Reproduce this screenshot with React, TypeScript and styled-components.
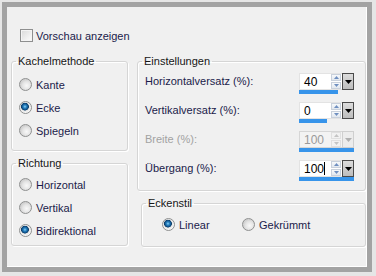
import React from "react";
import styled, { createGlobalStyle } from "styled-components";

const GlobalStyle = createGlobalStyle`
  html, body {
    margin: 0;
    padding: 0;
  }
  body {
    width: 376px;
    height: 276px;
    overflow: hidden;
    background: #e6e6e6;
    font-family: "Liberation Sans", Arial, sans-serif;
    font-size: 11px;
  }
`;

const Window = styled.div`
  box-sizing: border-box;
  margin: 2px 0 0 2px;
  width: 370px;
  height: 270px;
  border: 5px solid #a3a3a3;
  background: #f0f0f0;
  padding: 22px 0 0 4px;
  box-shadow: inset -1px -1px 0 #ffffff;
`;

const CheckRow = styled.label`
  display: flex;
  align-items: center;
  gap: 3px;
  height: 13px;
  margin-left: 9px;
  color: #1b1b4a;
`;

const CheckBox = styled.span`
  box-sizing: border-box;
  width: 13px;
  height: 13px;
  border: 1px solid #8e8f8f;
  background: linear-gradient(135deg, #d9d9d9 0%, #f3f3f3 70%, #fbfbfb 100%);
  box-shadow: inset 0 0 0 1px #f4f4f4;
`;

const Columns = styled.div`
  display: grid;
  grid-template-columns: 117px 229px;
  column-gap: 9px;
  margin-top: 12px;
`;

const Column = styled.div`
  display: flex;
  flex-direction: column;
  gap: 5px;
`;

const Group = styled.fieldset<{ $h: number; $inset?: number }>`
  box-sizing: border-box;
  height: ${(p) => p.$h}px;
  margin: 0 0 0 ${(p) => p.$inset ?? 0}px;
  min-width: 0;
  padding: 0;
  border: 1px solid #d5d5d5;
  border-radius: 3px;
  box-shadow: inset 1px 1px 0 #ffffff, 1px 1px 0 #ffffff;
`;

const Title = styled.legend`
  margin-left: 4px;
  padding: 0 2px;
  font-size: 11px;
  line-height: 14px;
  color: #161616;
`;

const RadioList = styled.div<{ $top: number }>`
  display: flex;
  flex-direction: column;
  padding: ${(p) => p.$top}px 0 0 7px;
`;

const RadioRow = styled.label<{ $w?: number }>`
  display: flex;
  align-items: center;
  gap: 4px;
  height: 23px;
  width: ${(p) => (p.$w ? `${p.$w}px` : "auto")};
  color: #1b1b4a;
`;

const RadioDot = styled.span<{ $on?: boolean }>`
  box-sizing: border-box;
  flex: none;
  width: 13px;
  height: 13px;
  border-radius: 50%;
  border: 1px solid #8f9090;
  background: ${(p) =>
    p.$on
      ? "radial-gradient(circle at 45% 42%, #8fd2f5 0, #2b86c4 1.5px, #10538c 3px, #0c3c66 3.6px, #e6e6e6 4.2px, #f6f6f6 6px)"
      : "radial-gradient(circle at 60% 60%, #f9f9f9 0, #e4e4e4 4px, #d2d2d2 6px)"};
`;

const HRow = styled.div`
  display: flex;
  padding: 3px 0 0 20px;
`;

const Settings = styled.div`
  display: flex;
  flex-direction: column;
  gap: 7px;
  padding: 5px 11px 0 7px;
`;

const SettingRow = styled.div`
  display: grid;
  grid-template-columns: 1fr 55px;
  align-items: start;
  height: 22px;
`;

const Label = styled.span<{ $off?: boolean }>`
  line-height: 17px;
  color: ${(p) => (p.$off ? "#a2a2a2" : "#1b1b4a")};
`;

const Spin = styled.div`
  display: flex;
  flex-direction: column;
`;

const SpinTop = styled.div`
  display: flex;
  height: 17px;
`;

const Field = styled.div<{ $off?: boolean }>`
  box-sizing: border-box;
  display: flex;
  align-items: center;
  width: 31px;
  padding-left: 4px;
  background: ${(p) => (p.$off ? "#f3f3f3" : "#ffffff")};
  border: 1px solid ${(p) => (p.$off ? "#d6d6d6" : "#e3e3e3")};
  border-right: none;
  color: ${(p) => (p.$off ? "#9a9a9a" : "#000000")};
  font-size: 12px;
`;

const Caret = styled.span`
  display: inline-block;
  width: 1px;
  height: 13px;
  background: #000;
`;

const Arrows = styled.div<{ $off?: boolean }>`
  box-sizing: border-box;
  width: 12px;
  display: flex;
  flex-direction: column;
  justify-content: center;
  gap: 1px;
  padding: 0 1px;
  background: ${(p) => (p.$off ? "#f3f3f3" : "#ffffff")};
  border-top: 1px solid ${(p) => (p.$off ? "#d6d6d6" : "#e3e3e3")};
  border-bottom: 1px solid ${(p) => (p.$off ? "#d6d6d6" : "#e3e3e3")};
`;

const ArrowBtn = styled.span<{ $off?: boolean }>`
  box-sizing: border-box;
  height: 7px;
  display: flex;
  align-items: center;
  justify-content: center;
  border: 1px solid ${(p) => (p.$off ? "#e0e0e0" : "#c9d1dc")};
  background: ${(p) => (p.$off ? "#f2f2f2" : "linear-gradient(#f7f9fb, #e2e8ef)")};
`;

const Drop = styled.div<{ $off?: boolean }>`
  box-sizing: border-box;
  width: 12px;
  display: flex;
  align-items: center;
  justify-content: center;
  border: 1px solid ${(p) => (p.$off ? "#cfcfcf" : "#4a4a4a")};
  background: ${(p) => (p.$off ? "#ececec" : "linear-gradient(#dcdcdc, #bdbdbd)")};
`;

const Bar = styled.div<{ $fill: number }>`
  height: 4px;
  width: ${(p) => p.$fill}px;
  background: #3794ea;
`;

const Tri = ({ up, color, w = 5 }: { up?: boolean; color: string; w?: number }) => (
  <svg width={w} height={Math.ceil(w / 2)} viewBox={`0 0 ${w} ${Math.ceil(w / 2)}`}>
    <polygon
      points={
        up
          ? `0,${Math.ceil(w / 2)} ${w},${Math.ceil(w / 2)} ${w / 2},0`
          : `0,0 ${w},0 ${w / 2},${Math.ceil(w / 2)}`
      }
      fill={color}
    />
  </svg>
);

type SpinProps = { value: string; fill: number; off?: boolean; caret?: boolean };

const SpinField = ({ value, fill, off, caret }: SpinProps) => (
  <Spin>
    <SpinTop>
      <Field $off={off}>
        {value}
        {caret && <Caret />}
      </Field>
      <Arrows $off={off}>
        <ArrowBtn $off={off}>
          <Tri up color={off ? "#c4c4c4" : "#6f8fc0"} />
        </ArrowBtn>
        <ArrowBtn $off={off}>
          <Tri color={off ? "#c4c4c4" : "#6f8fc0"} />
        </ArrowBtn>
      </Arrows>
      <Drop $off={off}>
        <Tri color={off ? "#b0b0b0" : "#000000"} w={7} />
      </Drop>
    </SpinTop>
    <Bar $fill={fill} />
  </Spin>
);

const settings = [
  { label: "Horizontalversatz (%):", value: "40", fill: 39 },
  { label: "Vertikalversatz (%):", value: "0", fill: 28 },
  { label: "Breite (%):", value: "100", fill: 55, off: true },
  { label: "Übergang (%):", value: "100", fill: 55, caret: true },
];

export default function App() {
  return (
    <>
      <GlobalStyle />
      <Window>
        <CheckRow>
          <CheckBox />
          Vorschau anzeigen
        </CheckRow>
        <Columns>
          <Column>
            <Group $h={97}>
              <Title>Kachelmethode</Title>
              <RadioList $top={5}>
                <RadioRow>
                  <RadioDot />
                  Kante
                </RadioRow>
                <RadioRow>
                  <RadioDot $on />
                  Ecke
                </RadioRow>
                <RadioRow>
                  <RadioDot />
                  Spiegeln
                </RadioRow>
              </RadioList>
            </Group>
            <Group $h={90}>
              <Title>Richtung</Title>
              <RadioList $top={3}>
                <RadioRow>
                  <RadioDot />
                  Horizontal
                </RadioRow>
                <RadioRow>
                  <RadioDot />
                  Vertikal
                </RadioRow>
                <RadioRow>
                  <RadioDot $on />
                  Bidirektional
                </RadioRow>
              </RadioList>
            </Group>
          </Column>
          <Column>
            <Group $h={137}>
              <Title>Einstellungen</Title>
              <Settings>
                {settings.map((s) => (
                  <SettingRow key={s.label}>
                    <Label $off={s.off}>{s.label}</Label>
                    <SpinField value={s.value} fill={s.fill} off={s.off} caret={s.caret} />
                  </SettingRow>
                ))}
              </Settings>
            </Group>
            <Group $h={51} $inset={4}>
              <Title>Eckenstil</Title>
              <HRow>
                <RadioRow $w={80}>
                  <RadioDot $on />
                  Linear
                </RadioRow>
                <RadioRow>
                  <RadioDot />
                  Gekrümmt
                </RadioRow>
              </HRow>
            </Group>
          </Column>
        </Columns>
      </Window>
    </>
  );
}
